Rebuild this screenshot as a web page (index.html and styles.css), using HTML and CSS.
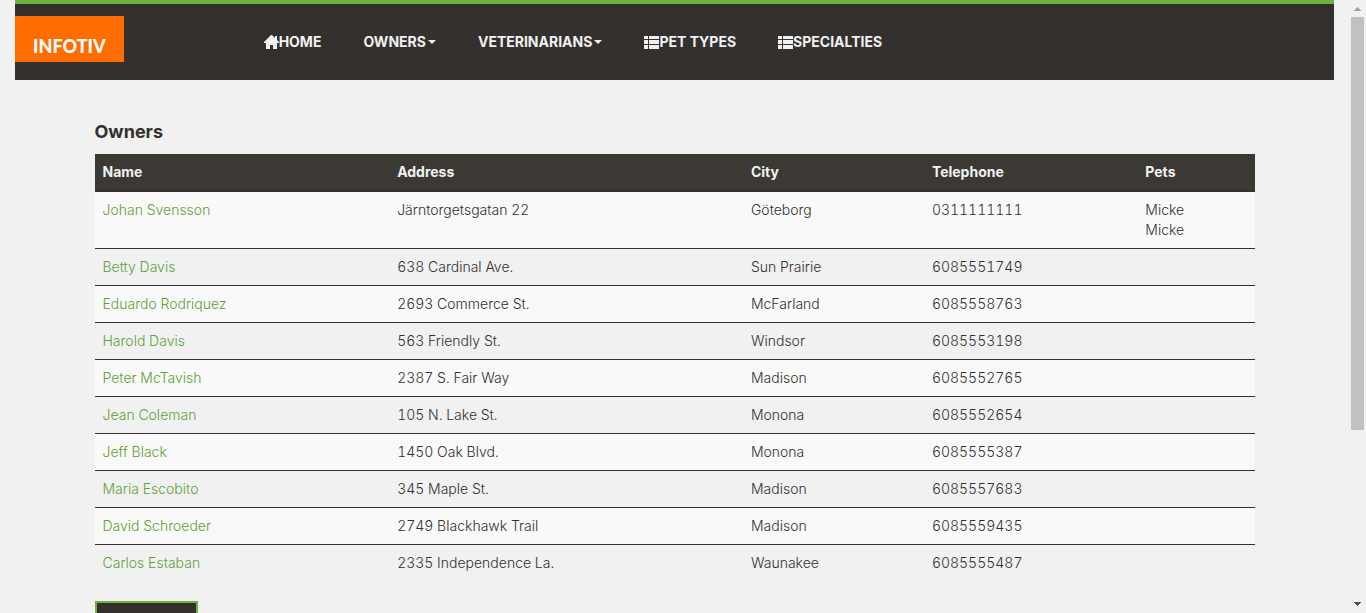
FILE: index.html
```html
<!DOCTYPE html>
<html lang="en">
<head>
<meta charset="utf-8">
<meta name="viewport" content="width=device-width, initial-scale=1">
<title>Owners</title>
<link rel="stylesheet" href="styles.css">
</head>
<body>
<div class="window">
  <div class="page">
    <header class="navbar">
      <a class="brand" href="#">INFOTIV</a>
      <nav class="menu">
        <a class="menu-item" href="#"><svg class="icon" viewBox="0 0 15 14" aria-hidden="true"><path d="M7 0h1l3 3V1h2v4l2 2v1h-2v6H9v-4H6v4H2V8H0V7z"/></svg>HOME</a>
        <a class="menu-item" href="#">OWNERS<span class="caret"></span></a>
        <a class="menu-item" href="#">VETERINARIANS<span class="caret"></span></a>
        <a class="menu-item" href="#"><svg class="icon" viewBox="0 0 15 14" aria-hidden="true"><path d="M0 1h4v3H0zM5 1h10v3H5zM0 5h4v4H0zM5 5h10v4H5zM0 10h4v4H0zM5 10h10v4H5z"/></svg>PET TYPES</a>
        <a class="menu-item" href="#"><svg class="icon" viewBox="0 0 15 14" aria-hidden="true"><path d="M0 1h4v3H0zM5 1h10v3H5zM0 5h4v4H0zM5 5h10v4H5zM0 10h4v4H0zM5 10h10v4H5z"/></svg>SPECIALTIES</a>
      </nav>
    </header>
    <main class="container">
      <h2 class="title">Owners</h2>
      <table class="owners">
        <colgroup><col class="col-name"><col class="col-address"><col class="col-city"><col class="col-phone"><col class="col-pets"></colgroup>
        <thead>
          <tr><th>Name</th><th>Address</th><th>City</th><th>Telephone</th><th>Pets</th></tr>
        </thead>
        <tbody>
          <tr><td><a href="#">Johan Svensson</a></td><td>Järntorgetsgatan 22</td><td>Göteborg</td><td>0311111111</td><td>Micke<br>Micke</td></tr>
          <tr><td><a href="#">Betty Davis</a></td><td>638 Cardinal Ave.</td><td>Sun Prairie</td><td>6085551749</td><td></td></tr>
          <tr><td><a href="#">Eduardo Rodriquez</a></td><td>2693 Commerce St.</td><td>McFarland</td><td>6085558763</td><td></td></tr>
          <tr><td><a href="#">Harold Davis</a></td><td>563 Friendly St.</td><td>Windsor</td><td>6085553198</td><td></td></tr>
          <tr><td><a href="#">Peter McTavish</a></td><td>2387 S. Fair Way</td><td>Madison</td><td>6085552765</td><td></td></tr>
          <tr><td><a href="#">Jean Coleman</a></td><td>105 N. Lake St.</td><td>Monona</td><td>6085552654</td><td></td></tr>
          <tr><td><a href="#">Jeff Black</a></td><td>1450 Oak Blvd.</td><td>Monona</td><td>6085555387</td><td></td></tr>
          <tr><td><a href="#">Maria Escobito</a></td><td>345 Maple St.</td><td>Madison</td><td>6085557683</td><td></td></tr>
          <tr><td><a href="#">David Schroeder</a></td><td>2749 Blackhawk Trail</td><td>Madison</td><td>6085559435</td><td></td></tr>
          <tr><td><a href="#">Carlos Estaban</a></td><td>2335 Independence La.</td><td>Waunakee</td><td>6085555487</td><td></td></tr>
        </tbody>
      </table>
      <button class="add" type="button" aria-label="Add Owner"></button>
    </main>
  </div>
  <div class="scrollbar" aria-hidden="true">
    <svg class="arrow up" viewBox="0 0 17 17"><path d="M8 7h1v1h1v1h1v1h1v1H5v-1h1V9h1V8h1z"/></svg>
    <div class="track"><div class="thumb"></div></div>
    <svg class="arrow down" viewBox="0 0 17 17"><path d="M5 6h7v1h-1v1h-1v1H9v1H8V9H7V8H6V7H5z"/></svg>
  </div>
</div>
</body>
</html>
```
FILE: styles.css
```css
* { box-sizing: border-box; }

body {
  margin: 0;
  background: #f1f1f1;
  color: #34302d;
  font: 14px/20px Inter, "Noto Sans", sans-serif;
}

.window {
  display: flex;
  height: 100vh;
  overflow: hidden;
}

.page {
  flex: 1;
  min-width: 0;
  padding: 0 15px;
}

.navbar {
  display: flex;
  align-items: center;
  gap: 119px;
  height: 80px;
  border-top: 4px solid #6db33f;
  background: #34302d;
}

.brand {
  align-self: flex-start;
  margin-top: 12px;
  padding: 20px 18px 6px;
  background: #ff6c00;
  color: #fff;
  font: 900 18px/20px Lato, sans-serif;
  text-decoration: none;
}

.menu { display: flex; }

.menu-item {
  display: flex;
  align-items: center;
  padding: 28px 21px;
  color: #f1f1f1;
  font: 700 14px/20px Inter, sans-serif;
  text-decoration: none;
  white-space: nowrap;
}

.icon {
  width: 15px;
  height: 14px;
  fill: #f1f1f1;
}

.caret {
  margin-left: 2px;
  border: 4px solid transparent;
  border-top-color: #f1f1f1;
  border-bottom: 0;
}

.container {
  max-width: 1160px;
  margin: 0 auto;
  padding-top: 42px;
}

.title {
  margin: 0 0 12px;
  font: 700 18px/20px Inter, sans-serif;
}

.owners {
  width: 100%;
  margin-bottom: 20px;
  border-spacing: 0;
  table-layout: fixed;
}

.col-name { width: 25.4%; }
.col-address { width: 30.5%; }
.col-city { width: 15.6%; }
.col-phone { width: 18.4%; }

.owners th,
.owners td {
  padding: 8px;
  text-align: left;
  vertical-align: top;
}

.owners th {
  border-bottom: 1px solid #34302d;
  background: #3c3834;
  color: #f1f1f1;
}

.owners td {
  border-top: 1px solid #34302d;
  font-weight: 300;
  font-variant-numeric: tabular-nums;
}

.owners tbody tr:nth-child(odd) { background: #f9f9f9; }

.owners a {
  color: #5fa134;
  text-decoration: none;
}

.add {
  display: block;
  width: 103px;
  height: 44px;
  border: 2px solid #6db33f;
  background: #34302d;
}

.scrollbar {
  display: flex;
  flex-direction: column;
  width: 17px;
}

.arrow {
  width: 17px;
  height: 17px;
}

.up { fill: #a3a3a3; }
.down { fill: #505050; }

.track {
  flex: 1;
  padding: 0 2px;
}

.thumb {
  height: 71.3%;
  background: #c1c1c1;
}
```
